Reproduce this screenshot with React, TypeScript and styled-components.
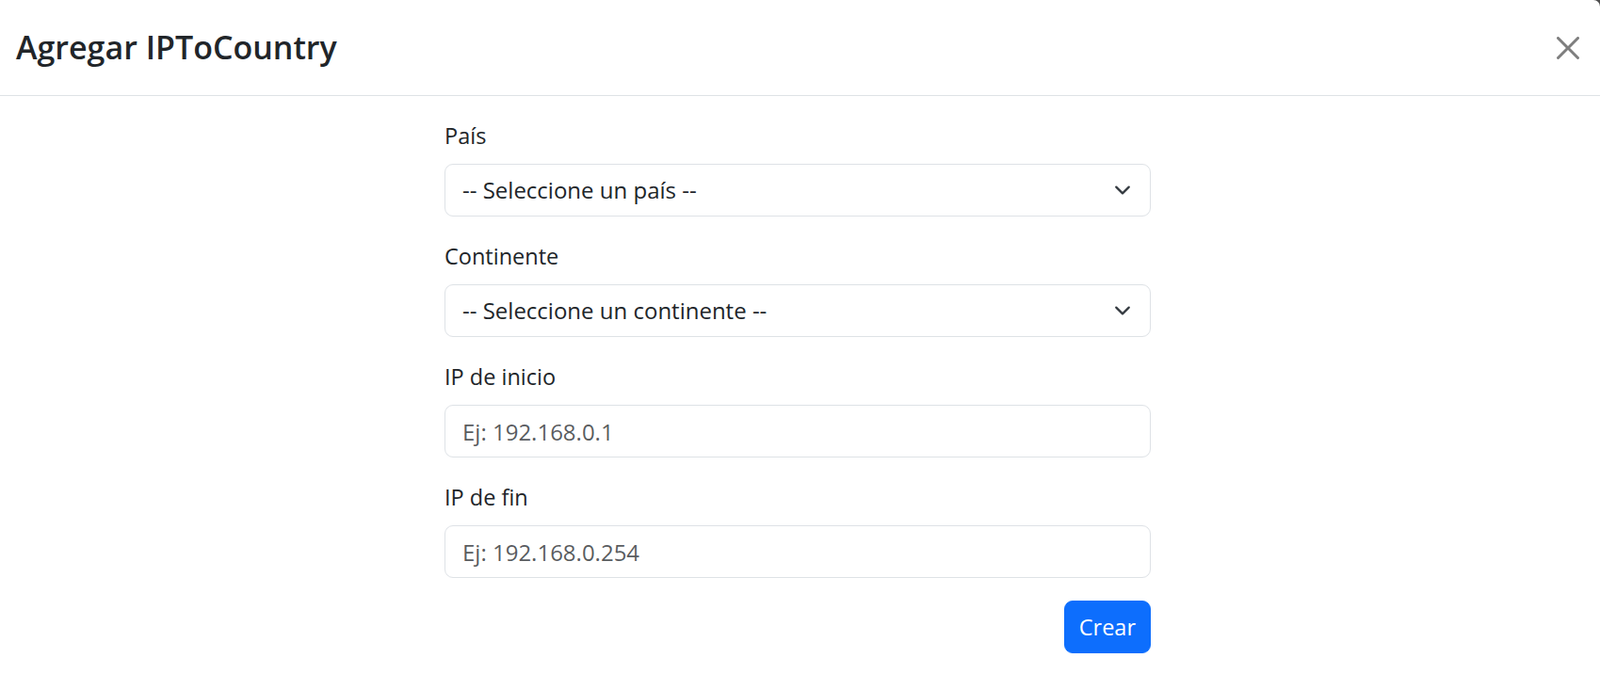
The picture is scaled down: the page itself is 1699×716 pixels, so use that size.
import React from 'react';
import styled, { createGlobalStyle } from 'styled-components';

const GlobalStyle = createGlobalStyle`
  html, body {
    margin: 0;
    padding: 0;
    background: #4d4d4d;
  }
  body {
    font-family: 'Segoe UI', 'Open Sans', 'Noto Sans', sans-serif;
    color: #212529;
  }
  * {
    box-sizing: border-box;
  }
`;

const fields = [
  { id: 'pais', label: 'País', type: 'select', value: '-- Seleccione un país --' },
  { id: 'continente', label: 'Continente', type: 'select', value: '-- Seleccione un continente --' },
  { id: 'ipInicio', label: 'IP de inicio', type: 'input', value: 'Ej: 192.168.0.1' },
  { id: 'ipFin', label: 'IP de fin', type: 'input', value: 'Ej: 192.168.0.254' },
];

const ChevronDown = () => (
  <Chevron viewBox='0 0 16 16' width='18' height='18'>
    <path
      d='m2 5 6 6 6-6'
      fill='none'
      stroke='#343a40'
      strokeWidth='2'
      strokeLinecap='round'
      strokeLinejoin='round'
    />
  </Chevron>
);

const CloseIcon = () => (
  <svg viewBox='0 0 16 16' width='24' height='24'>
    <path
      fill='#000'
      d='M.293.293a1 1 0 0 1 1.414 0L8 6.586 14.293.293a1 1 0 1 1 1.414 1.414L9.414 8l6.293 6.293a1 1 0 0 1-1.414 1.414L8 9.414l-6.293 6.293a1 1 0 0 1-1.414-1.414L6.586 8 .293 1.707a1 1 0 0 1 0-1.414z'
    />
  </svg>
);

const App: React.FC = () => {
  return (
    <>
      <GlobalStyle />
      <Dialog>
        <Header>
          <Title>Agregar IPToCountry</Title>
          <CloseButton type='button' aria-label='Close'>
            <CloseIcon />
          </CloseButton>
        </Header>
        <Body>
          <Form onSubmit={(e) => e.preventDefault()}>
            {fields.map((field) => (
              <Field key={field.id}>
                <Label htmlFor={field.id}>{field.label}</Label>
                {field.type === 'select' ? (
                  <SelectWrap>
                    <Select id={field.id} defaultValue=''>
                      <option value=''>{field.value}</option>
                    </Select>
                    <ChevronDown />
                  </SelectWrap>
                ) : (
                  <Input id={field.id} type='text' placeholder={field.value} />
                )}
              </Field>
            ))}
            <Actions>
              <Button type='submit'>Crear</Button>
            </Actions>
          </Form>
        </Body>
      </Dialog>
    </>
  );
};

const Dialog = styled.div`
  min-height: 100vh;
  background: #fff;
  border-top-right-radius: 7px;
`;

const Header = styled.div`
  height: 102px;
  padding: 0 22px 0 17px;
  display: flex;
  align-items: center;
  justify-content: space-between;
  border-bottom: 1px solid #dee2e6;
`;

const Title = styled.h5`
  margin: 0;
  font-size: 34px;
  font-weight: 600;
  line-height: 1.2;
  color: #212529;
`;

const CloseButton = styled.button`
  display: flex;
  align-items: center;
  justify-content: center;
  padding: 0;
  border: 0;
  background: transparent;
  opacity: 0.5;
  cursor: pointer;
`;

const Body = styled.div`
  padding: 24px 5px 24px 0;
  display: flex;
  justify-content: center;
`;

const Form = styled.form`
  width: 750px;
`;

const Field = styled.div`
  margin-bottom: 24px;
`;

const Label = styled.label`
  display: block;
  margin-bottom: 12px;
  font-size: 23.5px;
  line-height: 36px;
`;

const control = `
  display: block;
  width: 100%;
  height: 56px;
  padding: 9px 18px;
  font-family: inherit;
  font-size: 24px;
  line-height: 36px;
  color: #212529;
  background: #fff;
  border: 1px solid #dee2e6;
  border-radius: 9px;
  outline: none;
`;

const SelectWrap = styled.div`
  position: relative;
`;

const Select = styled.select`
  ${control}
  padding-right: 54px;
  appearance: none;
`;

const Chevron = styled.svg`
  position: absolute;
  right: 21px;
  top: 50%;
  transform: translateY(-50%);
  pointer-events: none;
`;

const Input = styled.input`
  ${control}
  &::placeholder {
    color: rgba(33, 37, 41, 0.75);
  }
`;

const Actions = styled.div`
  display: flex;
  justify-content: flex-end;
`;

const Button = styled.button`
  height: 56px;
  padding: 0 15px;
  font-family: inherit;
  font-size: 23.5px;
  color: #fff;
  background: #0d6efd;
  border: 1px solid #0d6efd;
  border-radius: 9px;
  cursor: pointer;
`;

export default App;
